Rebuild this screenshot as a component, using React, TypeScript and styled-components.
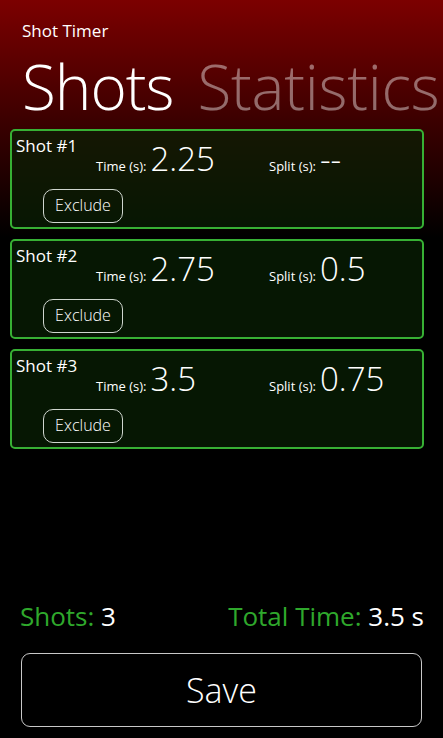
import React from "react";
import styled, { createGlobalStyle } from "styled-components";

const Global = createGlobalStyle`
  html, body { margin: 0; padding: 0; background: #000; }
  body { font-family: "Open Sans", "Noto Sans", sans-serif; color: #fff; }
  * { box-sizing: border-box; }
`;

const Screen = styled.div`
  width: 443px;
  height: 738px;
  overflow: hidden;
  display: flex;
  flex-direction: column;
  background: linear-gradient(to bottom, #7c0000 0px, #3c0000 120px, #000 238px, #000 100%);
`;

const Header = styled.header`
  padding: 0 0 0 22px;
  display: flex;
  flex-direction: column;
`;

const AppTitle = styled.div`
  margin-top: 20px;
  font-size: 17px;
  line-height: 22px;
  font-weight: 400;
`;

const Pivot = styled.div`
  display: flex;
  gap: 24px;
  white-space: nowrap;
  margin-top: 11px;
`;

const PivotItem = styled.div<{ $active?: boolean }>`
  font-size: 62px;
  line-height: 66px;
  font-weight: 300;
  letter-spacing: ${(p) => (p.$active ? "-1px" : "-0.2px")};
  color: ${(p) => (p.$active ? "#ffffff" : "rgba(255,255,255,0.42)")};
`;

const List = styled.div`
  display: flex;
  flex-direction: column;
  gap: 10px;
  padding: 10px 19px 0 10px;
`;

const Card = styled.div`
  height: 100px;
  border: 2px solid #37b034;
  border-radius: 5px;
  background: rgba(8, 32, 4, 0.72);
  padding: 4px 0 0 4px;
  display: flex;
  flex-direction: column;
`;

const CardTop = styled.div`
  display: flex;
  align-items: flex-start;
`;

const ShotLabel = styled.div`
  width: 80px;
  font-size: 17px;
  line-height: 22px;
`;

const Stat = styled.div<{ $width: number }>`
  width: ${(p) => p.$width}px;
  display: flex;
  align-items: baseline;
  margin-top: 4px;
  gap: 4px;
`;

const StatLabel = styled.span`
  font-size: 13px;
`;

const StatValue = styled.span`
  font-size: 33px;
  line-height: 40px;
  font-weight: 300;
`;

const ExcludeButton = styled.button`
  margin: 10px 0 0 27px;
  width: 80px;
  height: 34px;
  border: 1px solid #cfd6cf;
  border-radius: 10px;
  background: transparent;
  color: #fff;
  font-family: inherit;
  font-size: 16px;
  font-weight: 300;
  padding: 0 0 2px;
`;

const Spacer = styled.div`
  flex: 1;
`;

const Summary = styled.div`
  display: flex;
  justify-content: space-between;
  padding: 0 19px 0 20px;
  font-size: 26px;
  line-height: 30px;
  font-weight: 400;
`;

const SummaryItem = styled.div``;

const Key = styled.span`
  color: #2fa82c;
`;

const SaveButton = styled.button`
  margin: 22px 21px 11px 21px;
  height: 74px;
  border: 1.5px solid #c8c8c8;
  border-radius: 9px;
  background: transparent;
  color: #fff;
  font-family: inherit;
  font-size: 34px;
  font-weight: 300;
`;

type Shot = { n: number; time: string; split: string };

const shots: Shot[] = [
  { n: 1, time: "2.25", split: "--" },
  { n: 2, time: "2.75", split: "0.5" },
  { n: 3, time: "3.5", split: "0.75" },
];

export default function App() {
  return (
    <Screen>
      <Global />
      <Header>
        <AppTitle>Shot Timer</AppTitle>
        <Pivot>
          <PivotItem $active>Shots</PivotItem>
          <PivotItem>Statistics</PivotItem>
        </Pivot>
      </Header>
      <List>
        {shots.map((s) => (
          <Card key={s.n}>
            <CardTop>
              <ShotLabel>Shot #{s.n}</ShotLabel>
              <Stat $width={173}>
                <StatLabel>Time (s):</StatLabel>
                <StatValue>{s.time}</StatValue>
              </Stat>
              <Stat $width={150}>
                <StatLabel>Split (s):</StatLabel>
                <StatValue>{s.split}</StatValue>
              </Stat>
            </CardTop>
            <ExcludeButton>Exclude</ExcludeButton>
          </Card>
        ))}
      </List>
      <Spacer />
      <Summary>
        <SummaryItem>
          <Key>Shots:</Key> 3
        </SummaryItem>
        <SummaryItem>
          <Key>Total Time:</Key> 3.5 s
        </SummaryItem>
      </Summary>
      <SaveButton>Save</SaveButton>
    </Screen>
  );
}
